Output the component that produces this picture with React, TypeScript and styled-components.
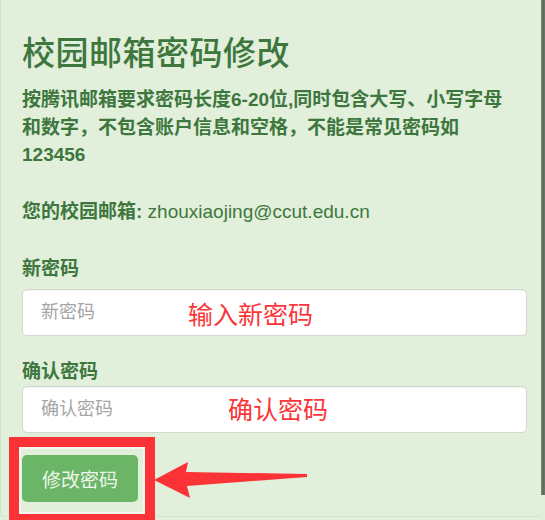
import React from 'react';
import styled, { createGlobalStyle } from 'styled-components';

const GlobalStyle = createGlobalStyle`
    html, body {
        margin: 0;
        padding: 0;
        background: #e1efdb;
        overflow: hidden;
    }
`

const Page = styled.div`
    display: flex;
    width: 545px;
    height: 520px;
    overflow: hidden;
    font-family: "Liberation Sans", "Noto Sans CJK SC", sans-serif;
`

const Panel = styled.div`
    position: relative;
    flex: 1;
    height: 517px;
    box-sizing: border-box;
    padding: 36px 14px 0 21px;
    background: #e1efdb;
    border-left: 1px solid #d3e6c8;
    border-bottom: 1px solid #d3e6c8;
    border-bottom-left-radius: 4px;
    color: #3e773e;
`

const ScrollTrack = styled.div`
    width: 4px;
    height: 100%;
    background: #e1efdb;
`

const ScrollThumb = styled.div`
    height: 495px;
    background: linear-gradient(90deg, #7d887c 0%, #5c685b 60%, #6f7a6e 100%);
`

const Title = styled.h1`
    margin: 0;
    font-size: 33px;
    line-height: 36px;
    font-weight: 500;
    letter-spacing: 0.5px;
`

const Notice = styled.p`
    margin: 14px 0 0;
    max-width: 488px;
    font-size: 19px;
    line-height: 27.5px;
    font-weight: 700;
`

const MailLine = styled.div`
    margin-top: 29px;
    font-size: 19px;
    line-height: 27px;

    b {
        font-weight: 700;
    }
`

const Field = styled.div<{ top: number; gap: number }>`
    margin-top: ${(props) => props.top}px;
    display: flex;
    flex-direction: column;
    gap: ${(props) => props.gap}px;
`

const Label = styled.label`
    font-size: 19px;
    line-height: 27px;
    font-weight: 700;
`

const InputWrap = styled.div`
    position: relative;
`

const TextInput = styled.input`
    display: block;
    width: 100%;
    height: 47px;
    box-sizing: border-box;
    padding: 0 18px;
    border: 1px solid #d2d8cf;
    border-radius: 5px;
    background: #fff;
    box-shadow: inset 0 1px 1px rgba(0, 0, 0, 0.05);
    font-family: "Liberation Sans", "Noto Sans CJK SC", sans-serif;
    font-size: 18px;
    color: #555;

    &::placeholder {
        color: #a5a5a5;
    }
`

const Annotation = styled.span<{ left: number; top: number }>`
    position: absolute;
    left: ${(props) => props.left}px;
    top: ${(props) => props.top}px;
    transform: translateY(-50%);
    color: #fb3538;
    font-size: 25px;
    line-height: 1;
    white-space: nowrap;
    pointer-events: none;
`

const SubmitBtn = styled.button`
    margin-top: 22px;
    width: 116px;
    height: 47px;
    border: none;
    border-radius: 5px;
    background: #6bb566;
    color: #eef6ec;
    font-family: "Liberation Sans", "Noto Sans CJK SC", sans-serif;
    font-size: 19px;
    cursor: pointer;
`

const HighlightBox = styled.div`
    position: absolute;
    left: 8px;
    top: 437px;
    width: 146px;
    height: 87px;
    box-sizing: border-box;
    border: 10px solid #fb3336;
    box-shadow: inset 0 0 0 2px #f3f6ee;
    pointer-events: none;
`

const ArrowLayer = styled.svg`
    position: absolute;
    left: 0;
    top: 0;
    pointer-events: none;
`

export default function App() {
    return (
        <Page>
            <GlobalStyle />
            <Panel>
                <Title>校园邮箱密码修改</Title>
                <Notice>
                    按腾讯邮箱要求密码长度6-20位,同时包含大写、小写字母和数字，不包含账户信息和空格，不能是常见密码如123456
                </Notice>
                <MailLine>
                    <b>您的校园邮箱:</b> zhouxiaojing@ccut.edu.cn
                </MailLine>

                <Field top={30} gap={7}>
                    <Label>新密码</Label>
                    <InputWrap>
                        <TextInput type="password" placeholder="新密码" />
                        <Annotation left={166} top={26}>输入新密码</Annotation>
                    </InputWrap>
                </Field>

                <Field top={22} gap={1}>
                    <Label>确认密码</Label>
                    <InputWrap>
                        <TextInput type="password" placeholder="确认密码" />
                        <Annotation left={206} top={24}>确认密码</Annotation>
                    </InputWrap>
                </Field>

                <SubmitBtn type="button">修改密码</SubmitBtn>

                <HighlightBox />
                <ArrowLayer width="540" height="520" viewBox="0 0 540 520">
                    <polygon
                        points="153,480 187,462 185,472 306,474 306,477 186,486 189,498"
                        fill="#fb3336"
                    />
                </ArrowLayer>
            </Panel>
            <ScrollTrack>
                <ScrollThumb />
            </ScrollTrack>
        </Page>
    );
}
